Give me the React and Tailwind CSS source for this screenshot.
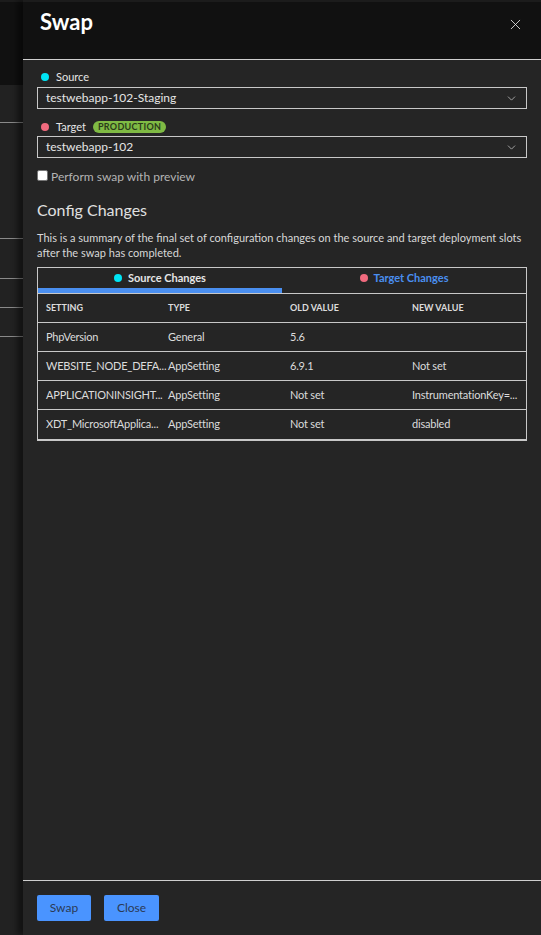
import { X, ChevronDown } from 'lucide-react';

const rows = [
  { setting: 'PhpVersion', type: 'General', oldValue: '5.6', newValue: '' },
  { setting: 'WEBSITE_NODE_DEFA...', type: 'AppSetting', oldValue: '6.9.1', newValue: 'Not set' },
  { setting: 'APPLICATIONINSIGHT...', type: 'AppSetting', oldValue: 'Not set', newValue: 'InstrumentationKey=...' },
  { setting: 'XDT_MicrosoftApplica...', type: 'AppSetting', oldValue: 'Not set', newValue: 'disabled' },
];

const SlotSelect = ({ value }) => (
  <div className="flex h-[22px] items-center justify-between border border-[#c8c8c8] pl-[8px] pr-[8px] text-[12px] text-[#e6e6e6]">
    <span>{value}</span>
    <ChevronDown size={13} strokeWidth={1.5} className="text-[#bbbbbb]" />
  </div>
);

const App = () => {
  return (
    <div
      className="flex h-[935px] w-[541px] overflow-hidden bg-[#222222] text-white"
      style={{ fontFamily: 'Lato, "Open Sans", sans-serif' }}
    >
      {/* page behind the blade */}
      <div className="flex w-[23px] shrink-0 flex-col">
        <div className="h-[2px] bg-[#1c1c1c]" />
        <div className="h-[83px] bg-[#111111]" />
        <div className="h-[37px]" />
        <div className="h-px bg-[#8a8a8a]" />
        <div className="h-[115px]" />
        <div className="h-px bg-[#8a8a8a]" />
        <div className="h-[39px]" />
        <div className="h-px bg-[#8a8a8a]" />
        <div className="h-[28px]" />
        <div className="h-px bg-[#8a8a8a]" />
        <div className="h-[28px]" />
        <div className="h-px bg-[#8a8a8a]" />
      </div>

      {/* blade */}
      <div className="flex flex-1 flex-col bg-[#252525] shadow-[-6px_0_6px_rgba(0,0,0,0.45)]">
        <div className="h-[2px] bg-[#1c1c1c]" />
        <div className="flex h-[58px] items-start justify-between border-b border-[#cfcfcf] bg-[#111111] pl-[17px] pr-[17px] pt-[5px]">
          <h1 className="text-[22px] font-bold leading-[30px]">Swap</h1>
          <X size={17} strokeWidth={1.2} className="mt-[9px] text-[#e6e6e6]" />
        </div>

        <div className="flex flex-1 flex-col px-[14px]">
          <div className="mt-[9px] flex items-center gap-[7px] text-[11px] leading-[16px] text-[#e6e6e6]">
            <span className="ml-[4px] h-[8px] w-[8px] rounded-full bg-[#00e5f5]" />
            Source
          </div>
          <div className="mt-[2px]">
            <SlotSelect value="testwebapp-102-Staging" />
          </div>

          <div className="mt-[10px] flex items-center gap-[7px] text-[11px] leading-[16px] text-[#e6e6e6]">
            <span className="ml-[4px] h-[8px] w-[8px] rounded-full bg-[#f06a7e]" />
            Target
            <span className="rounded-full bg-[#7fba44] px-[5px] text-[9px] font-bold leading-[12px] tracking-[0.3px] text-[#2b3a1a]">
              PRODUCTION
            </span>
          </div>
          <div className="mt-[1px]">
            <SlotSelect value="testwebapp-102" />
          </div>

          <label className="mt-[12px] flex items-center gap-[3px] text-[12px] leading-[14px] text-[#b4b4b4]">
            <span className="mb-[3px] h-[11px] w-[11px] rounded-[2px] border border-[#777777] bg-white" />
            Perform swap with preview
          </label>

          <h2 className="mt-[16px] text-[16px] leading-[20px] text-[#e0e0e0]">Config Changes</h2>
          <p className="mt-[10px] pr-[2px] text-[11px] leading-[15px] text-[#d8d8d8]">
            This is a summary of the final set of configuration changes on the source and target deployment slots after the swap has completed.
          </p>

          <div className="mt-[7px] border border-b-2 border-[#c8c8c8]">
            <div className="flex border-b border-[#c8c8c8] text-[11px] font-bold">
              <div className="flex h-[25px] flex-1 flex-col">
                <div className="flex flex-1 items-center justify-center gap-[6px] text-[#e6e6e6]">
                  <span className="h-[8px] w-[8px] rounded-full bg-[#00e5f5]" />
                  Source Changes
                </div>
                <div className="h-[5px] bg-[#4a8ff0]" />
              </div>
              <div className="flex h-[25px] flex-1 items-center justify-center gap-[6px] pb-[5px] text-[#4a8ff0]">
                <span className="h-[8px] w-[8px] rounded-full bg-[#f06a7e]" />
                Target Changes
              </div>
            </div>

            <div className="grid h-[29px] grid-cols-4 items-center border-b border-[#c8c8c8] text-[9px] font-bold text-[#dcdcdc]">
              <div className="px-[8px]">SETTING</div>
              <div className="px-[8px]">TYPE</div>
              <div className="px-[8px]">OLD VALUE</div>
              <div className="px-[8px]">NEW VALUE</div>
            </div>

            {rows.map((row, i) => (
              <div
                key={row.setting}
                className={`grid h-[29px] grid-cols-4 items-center text-[11px] tracking-[-0.2px] text-[#dcdcdc] ${i < rows.length - 1 ? 'border-b border-[#c8c8c8]' : ''}`}
              >
                <div className="whitespace-nowrap pl-[8px]">{row.setting}</div>
                <div className="whitespace-nowrap pl-[8px]">{row.type}</div>
                <div className="whitespace-nowrap pl-[8px]">{row.oldValue}</div>
                <div className="whitespace-nowrap pl-[8px]">{row.newValue}</div>
              </div>
            ))}
          </div>
        </div>

        <div className="flex h-[55px] shrink-0 items-start gap-[13px] border-t border-[#cfcfcf] px-[14px] pt-[14px]">
          <button className="h-[26px] w-[54px] rounded-[2px] bg-[#4a94ff] text-[12px] text-[#2a3a55]">Swap</button>
          <button className="h-[26px] w-[55px] rounded-[2px] bg-[#4a94ff] text-[12px] text-[#2a3a55]">Close</button>
        </div>
      </div>
    </div>
  );
};

export default App;
